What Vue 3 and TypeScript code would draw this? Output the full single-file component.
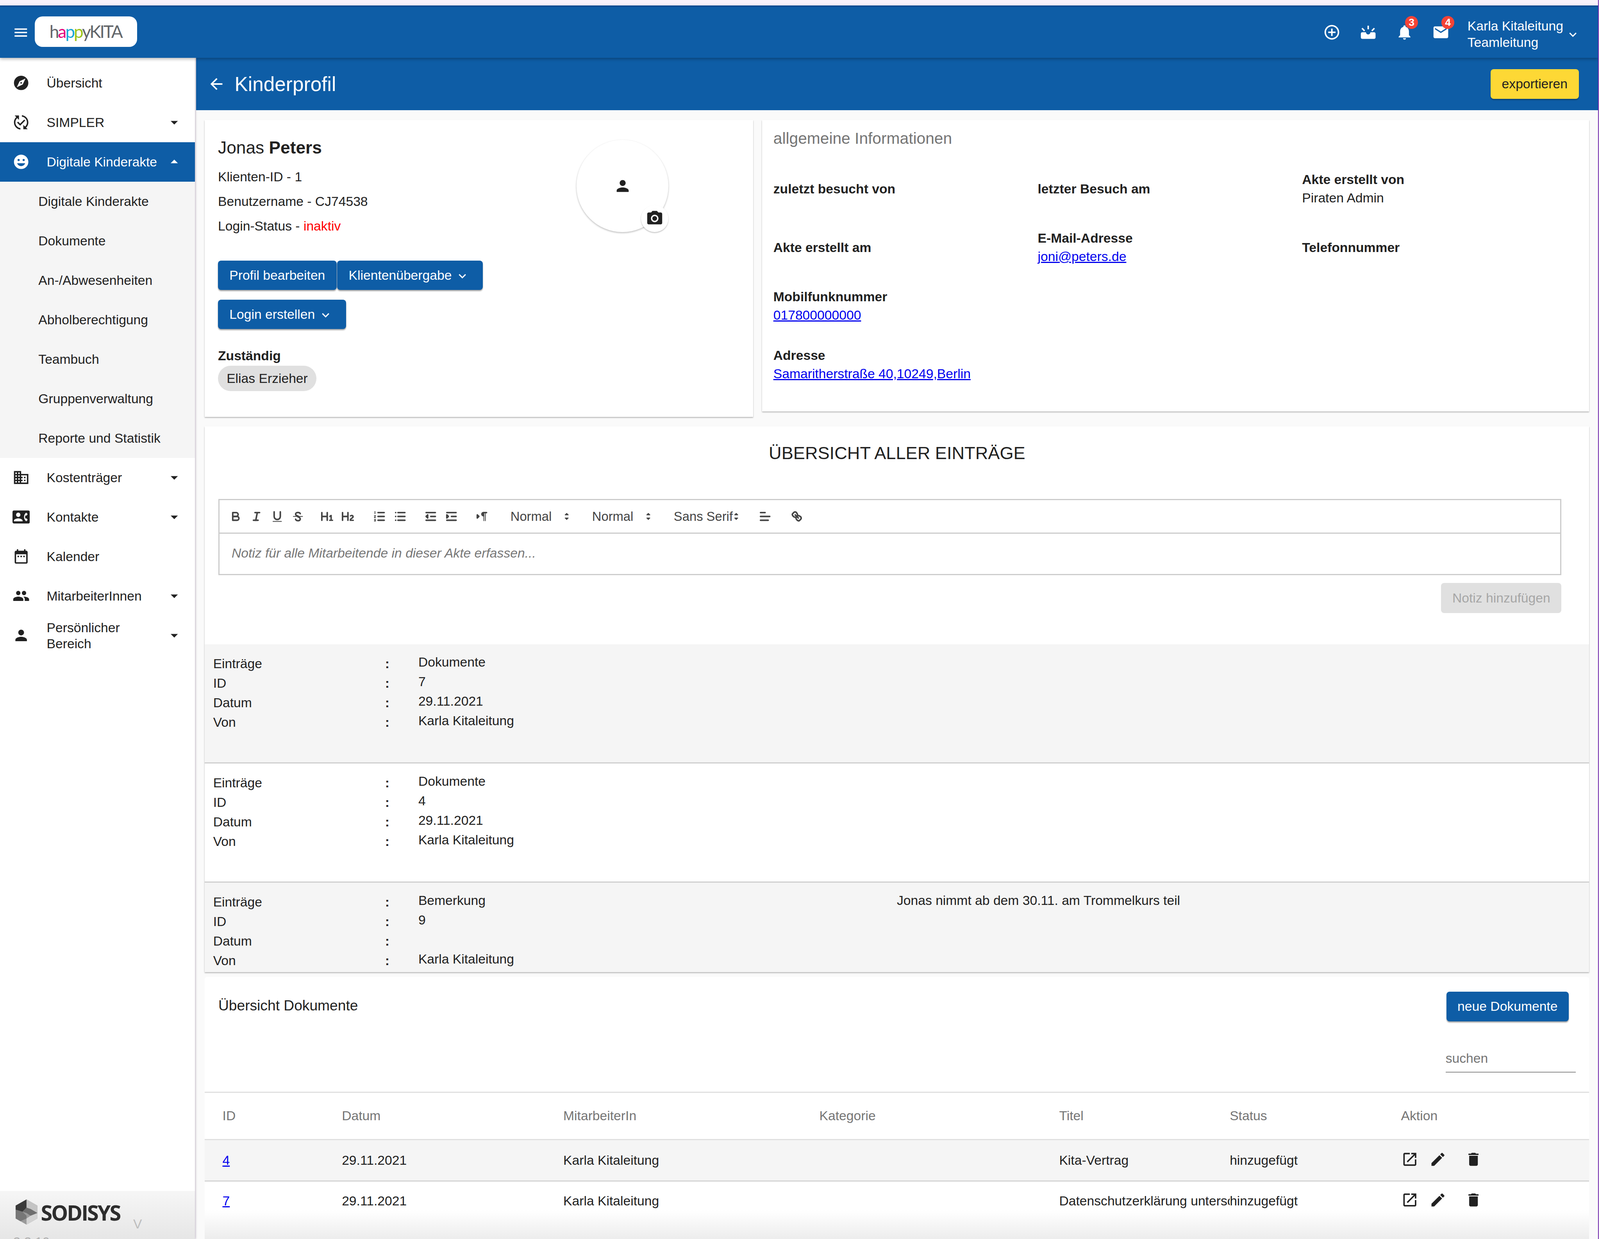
<script setup lang="ts">
interface NavItem {
  label: string;
  icon?: string;
  arrow?: "down" | "up";
  active?: boolean;
  sub?: boolean;
}

const ICONS: Record<string, string> = {
  menu: "M3 18h18v-2H3v2zm0-5h18v-2H3v2zm0-7v2h18V6H3z",
  explore:
    "M12 10.9c-.61 0-1.1.49-1.1 1.1s.49 1.1 1.1 1.1c.61 0 1.1-.49 1.1-1.1s-.49-1.1-1.1-1.1zM12 2C6.48 2 2 6.48 2 12s4.48 10 10 10 10-4.48 10-10S17.52 2 12 2zm2.19 12.19L6 18l3.81-8.19L18 6l-3.81 8.19z",
  changes:
    "M17.66,9.53l-7.07,7.07l-4.24-4.24l1.41-1.41l2.83,2.83l5.66-5.66L17.66,9.53z M4,12c0-2.33,1.02-4.42,2.62-5.88L9,8.5v-6H3 l2.2,2.2C3.24,6.52,2,9.11,2,12c0,5.19,3.95,9.45,9,9.95v-2.02C7.06,19.44,4,16.07,4,12z M22,12c0-5.19-3.95-9.45-9-9.95v2.02 c3.94,0.49,7,3.86,7,7.93c0,2.33-1.02,4.42-2.62,5.88L15,15.5v6h6l-2.2-2.2C20.76,17.48,22,14.89,22,12z",
  face: "M12 2C6.48 2 2 6.48 2 12s4.48 10 10 10 10-4.48 10-10S17.52 2 12 2zM8.5 8a1.5 1.5 0 1 1 0 3 1.5 1.5 0 0 1 0-3zm7 0a1.5 1.5 0 1 1 0 3 1.5 1.5 0 0 1 0-3zM12 18c-2.6 0-4.8-1.7-5.6-4h11.2c-.8 2.3-3 4-5.6 4z",
  business:
    "M12 7V3H2v18h20V7H12zM6 19H4v-2h2v2zm0-4H4v-2h2v2zm0-4H4V9h2v2zm0-4H4V5h2v2zm4 12H8v-2h2v2zm0-4H8v-2h2v2zm0-4H8V9h2v2zm0-4H8V5h2v2zm10 12h-8v-2h2v-2h-2v-2h2v-2h-2V9h8v10zm-2-8h-2v2h2v-2zm0 4h-2v2h2v-2z",
  contact:
    "M22 3H2C.9 3 0 3.9 0 5v14c0 1.1.9 2 2 2h20c1.1 0 1.99-.9 1.99-2L24 5c0-1.1-.9-2-2-2zM8 6c1.66 0 3 1.34 3 3s-1.34 3-3 3-3-1.34-3-3 1.34-3 3-3zm6 12H2v-1c0-2 4-3.1 6-3.1s6 1.1 6 3.1v1zm3.85-4h1.64L21 16l-1.99 1.99c-1.31-.98-2.28-2.38-2.73-3.99-.18-.64-.28-1.31-.28-2s.1-1.36.28-2c.45-1.62 1.42-3.01 2.73-3.99L21 8l-1.51 2h-1.64c-.22.63-.35 1.3-.35 2s.13 1.37.35 2z",
  calendar:
    "M9 11H7v2h2v-2zm4 0h-2v2h2v-2zm4 0h-2v2h2v-2zm2-7h-1V2h-2v2H8V2H6v2H5c-1.11 0-1.99.9-1.99 2L3 20c0 1.1.89 2 2 2h14c1.1 0 2-.9 2-2V6c0-1.1-.9-2-2-2zm0 16H5V9h14v11z",
  people:
    "M16 11c1.66 0 2.99-1.34 2.99-3S17.66 5 16 5c-1.66 0-3 1.34-3 3s1.34 3 3 3zm-8 0c1.66 0 2.99-1.34 2.99-3S9.66 5 8 5C6.34 5 5 6.34 5 8s1.34 3 3 3zm0 2c-2.33 0-7 1.17-7 3.5V19h14v-2.5c0-2.33-4.67-3.5-7-3.5zm8 0c-.29 0-.62.02-.97.05 1.16.84 1.97 1.97 1.97 3.45V19h6v-2.5c0-2.33-4.67-3.5-7-3.5z",
  person:
    "M12 12c2.21 0 4-1.79 4-4s-1.79-4-4-4-4 1.79-4 4 1.79 4 4 4zm0 2c-2.67 0-8 1.34-8 4v2h16v-2c0-2.66-5.33-4-8-4z",
  down: "M7 10l5 5 5-5z",
  up: "M7 14l5-5 5 5z",
  back: "M20 11H7.83l5.59-5.59L12 4l-8 8 8 8 1.41-1.41L7.83 13H20v-2z",
  plus: "M13 7h-2v4H7v2h4v4h2v-4h4v-2h-4V7zm-1-5C6.49 2 2 6.49 2 12s4.49 10 10 10 10-4.49 10-10S17.51 2 12 2zm0 18c-4.41 0-8-3.59-8-8s3.59-8 8-8 8 3.59 8 8-3.59 8-8 8z",
  upcoming:
    "M21.16 7.26l-1.41-1.41L16.19 9.4l1.41 1.41s3.45-3.56 3.56-3.55zM13 3h-2v5h2V3zM6.4 10.81L7.81 9.4 4.26 5.84 2.84 7.26c.11-.01 3.56 3.55 3.56 3.55zM20 12h-5c0 1.66-1.34 3-3 3s-3-1.34-3-3H4c-1.1 0-2 .9-2 2v5c0 1.1.9 2 2 2h16c1.1 0 2-.9 2-2v-5c0-1.1-.9-2-2-2z",
  bell: "M12 22c1.1 0 2-.9 2-2h-4c0 1.1.89 2 2 2zm6-6v-5c0-3.07-1.64-5.64-4.5-6.32V4c0-.83-.67-1.5-1.5-1.5s-1.5.67-1.5 1.5v.68C7.63 5.36 6 7.92 6 11v5l-2 2v1h16v-1l-2-2z",
  mail: "M20 4H4c-1.1 0-1.99.9-1.99 2L2 18c0 1.1.9 2 2 2h16c1.1 0 2-.9 2-2V6c0-1.1-.9-2-2-2zm0 4l-8 5-8-5V6l8 5 8-5v2z",
  chevron: "M16.59 8.59L12 13.17 7.41 8.59 6 10l6 6 6-6z",
  camera:
    "M12 8.8a3.2 3.2 0 1 0 0 6.4 3.2 3.2 0 0 0 0-6.4zM9 2L7.17 4H4c-1.1 0-2 .9-2 2v12c0 1.1.9 2 2 2h16c1.1 0 2-.9 2-2V6c0-1.1-.9-2-2-2h-3.17L15 2H9zm3 15c-2.76 0-5-2.24-5-5s2.24-5 5-5 5 2.24 5 5-2.24 5-5 5z",
  open: "M19 19H5V5h7V3H5c-1.11 0-2 .9-2 2v14c0 1.1.89 2 2 2h14c1.1 0 2-.9 2-2v-7h-2v7zM14 3v2h3.59l-9.83 9.83 1.41 1.41L19 6.41V10h2V3h-7z",
  edit: "M3 17.25V21h3.75L17.81 9.94l-3.75-3.75L3 17.25zM20.71 7.04c.39-.39.39-1.02 0-1.41l-2.34-2.34c-.39-.39-1.02-.39-1.41 0l-1.83 1.83 3.75 3.75 1.83-1.83z",
  trash: "M6 19c0 1.1.9 2 2 2h8c1.1 0 2-.9 2-2V7H6v12zM19 4h-3.5l-1-1h-5l-1 1H5v2h14V4z",
};

const navItems: NavItem[] = [
  { label: "Übersicht", icon: "explore" },
  { label: "SIMPLER", icon: "changes", arrow: "down" },
  { label: "Digitale Kinderakte", icon: "face", arrow: "up", active: true },
  { label: "Digitale Kinderakte", sub: true },
  { label: "Dokumente", sub: true },
  { label: "An-/Abwesenheiten", sub: true },
  { label: "Abholberechtigung", sub: true },
  { label: "Teambuch", sub: true },
  { label: "Gruppenverwaltung", sub: true },
  { label: "Reporte und Statistik", sub: true },
  { label: "Kostenträger", icon: "business", arrow: "down" },
  { label: "Kontakte", icon: "contact", arrow: "down" },
  { label: "Kalender", icon: "calendar" },
  { label: "MitarbeiterInnen", icon: "people", arrow: "down" },
  { label: "Persönlicher Bereich", icon: "person", arrow: "down" },
];

const infoCells = [
  { label: "zuletzt besucht von" },
  { label: "letzter Besuch am" },
  { label: "Akte erstellt von", value: "Piraten Admin" },
  { label: "Akte erstellt am" },
  { label: "E-Mail-Adresse", link: "joni@peters.de" },
  { label: "Telefonnummer" },
  { label: "Mobilfunknummer", link: "017800000000" },
];

const entries = [
  { type: "Dokumente", id: "7", date: "29.11.2021", by: "Karla Kitaleitung", note: "" },
  { type: "Dokumente", id: "4", date: "29.11.2021", by: "Karla Kitaleitung", note: "" },
  {
    type: "Bemerkung",
    id: "9",
    date: "",
    by: "Karla Kitaleitung",
    note: "Jonas nimmt ab dem 30.11. am Trommelkurs teil",
  },
];

const documents = [
  { id: "4", date: "29.11.2021", by: "Karla Kitaleitung", title: "Kita-Vertrag", status: "hinzugefügt" },
  { id: "7", date: "29.11.2021", by: "Karla Kitaleitung", title: "Datenschutzerklärung unterschrieben", status: "hinzugefügt" },
];

const columns = ["ID", "Datum", "MitarbeiterIn", "Kategorie", "Titel", "Status", "Aktion"];
</script>

<template>
  <div class="page">
    <header class="topbar">
      <svg class="menu-icon" viewBox="0 0 24 24"><path :d="ICONS.menu" /></svg>
      <div class="logo">
        <span class="logo-grey">h</span><span class="logo-pink">a</span><span class="logo-blue">p</span><span class="logo-green">p</span><span class="logo-grey">yKITA</span>
      </div>
      <div class="top-actions">
        <svg class="top-icon" viewBox="0 0 24 24"><path :d="ICONS.plus" /></svg>
        <svg class="top-icon" viewBox="0 0 24 24"><path :d="ICONS.upcoming" /></svg>
        <span class="top-badged">
          <svg class="top-icon" viewBox="0 0 24 24"><path :d="ICONS.bell" /></svg>
          <span class="badge">3</span>
        </span>
        <span class="top-badged">
          <svg class="top-icon" viewBox="0 0 24 24"><path :d="ICONS.mail" /></svg>
          <span class="badge">4</span>
        </span>
        <div class="user">Karla Kitaleitung<br />Teamleitung</div>
        <svg class="user-chevron" viewBox="0 0 24 24"><path :d="ICONS.chevron" /></svg>
      </div>
    </header>

    <div class="body-row">
      <aside class="sidebar">
        <nav class="nav">
          <div
            v-for="item in navItems"
            :key="item.label + item.sub"
            class="nav-item"
            :class="{ active: item.active, sub: item.sub }"
          >
            <svg v-if="item.icon" class="nav-icon" viewBox="0 0 24 24"><path :d="ICONS[item.icon]" /></svg>
            <span class="nav-label">{{ item.label }}</span>
            <svg v-if="item.arrow" class="nav-arrow" viewBox="0 0 24 24"><path :d="ICONS[item.arrow]" /></svg>
          </div>
        </nav>
        <div class="side-foot">
          <div class="foot-row">
            <svg class="hex" viewBox="0 0 64 74">
              <polygon points="32,0 64,18 64,56 32,74 0,56 0,18" fill="#9a9a9a" />
              <polygon points="32,0 0,18 0,30 20,36 32,24" fill="#3a3a3a" />
              <polygon points="32,0 64,18 64,40 44,28 32,24" fill="#c4c4c4" />
              <polygon points="32,24 44,28 64,40 44,48 32,40 20,36" fill="#6e6e6e" />
              <polygon points="0,30 20,36 32,48 32,56 14,64 0,56" fill="#777" />
              <polygon points="32,56 44,48 64,40 64,56 32,74" fill="#d2d2d2" />
            </svg>
            <span class="sodisys">SODISYS</span>
            <span class="version-v">V</span>
          </div>
          <div class="version">3.3.10</div>
        </div>
      </aside>

      <main class="main">
        <div class="title-bar">
          <svg class="back-icon" viewBox="0 0 24 24"><path :d="ICONS.back" /></svg>
          <span class="title">Kinderprofil</span>
          <button class="btn-export">exportieren</button>
        </div>

        <div class="content">
          <div class="top-cards">
            <section class="card card-profile">
              <div class="profile-left">
                <div class="name">Jonas <b>Peters</b></div>
                <div class="meta">Klienten-ID - 1</div>
                <div class="meta">Benutzername - CJ74538</div>
                <div class="meta">Login-Status - <span class="inactive">inaktiv</span></div>
                <div class="btn-row first">
                  <button class="btn">Profil bearbeiten</button>
                  <button class="btn with-icon">
                    Klientenübergabe
                    <svg viewBox="0 0 24 24"><path :d="ICONS.chevron" /></svg>
                  </button>
                </div>
                <div class="btn-row">
                  <button class="btn with-icon">
                    Login erstellen
                    <svg viewBox="0 0 24 24"><path :d="ICONS.chevron" /></svg>
                  </button>
                </div>
                <div class="resp-label">Zuständig</div>
                <span class="chip">Elias Erzieher</span>
              </div>
              <div class="avatar-slot">
                <div class="avatar">
                  <svg class="avatar-person" viewBox="0 0 24 24"><path :d="ICONS.person" /></svg>
                  <span class="avatar-cam">
                    <svg viewBox="0 0 24 24"><path :d="ICONS.camera" /></svg>
                  </span>
                </div>
              </div>
            </section>

            <section class="card card-info">
              <h2 class="info-title">allgemeine Informationen</h2>
              <div class="info-grid">
                <div v-for="cell in infoCells" :key="cell.label" class="info-cell">
                  <b>{{ cell.label }}</b>
                  <span v-if="cell.value">{{ cell.value }}</span>
                  <a v-if="cell.link" href="#">{{ cell.link }}</a>
                </div>
                <div class="info-cell wide">
                  <b>Adresse</b>
                  <a href="#">Samaritherstraße 40,10249,Berlin</a>
                </div>
              </div>
            </section>
          </div>

          <section class="card card-main">
            <h1 class="overview-title">ÜBERSICHT ALLER EINTRÄGE</h1>

            <div class="editor">
              <div class="toolbar">
                <span class="tb"><svg viewBox="0 0 18 18"><path class="st" d="M5,4H9.5A2.5,2.5,0,0,1,12,6.5v0A2.5,2.5,0,0,1,9.5,9H5V4Z" /><path class="st" d="M5,9h5.5A2.5,2.5,0,0,1,13,11.5v0A2.5,2.5,0,0,1,10.5,14H5V9Z" /></svg></span>
                <span class="tb"><svg viewBox="0 0 18 18"><line class="st" x1="7" x2="13" y1="4" y2="4" /><line class="st" x1="5" x2="11" y1="14" y2="14" /><line class="st" x1="8" x2="10" y1="14" y2="4" /></svg></span>
                <span class="tb"><svg viewBox="0 0 18 18"><path class="st" d="M5,3V9a4,4,0,0,0,4,4H9a4,4,0,0,0,4-4V3" /><rect class="fl" x="3" y="15" width="12" height="1" rx=".5" /></svg></span>
                <span class="tb"><svg viewBox="0 0 18 18"><line class="st thin" x1="15" x2="3" y1="9" y2="9" /><path class="st" d="M12 5.5C12 3.5 6 3 6 6c0 1.6 1.5 2.2 3 2.5M6 12.5c0 2.5 6 3 6 0 0-1.5-1.5-2.5-3-3" /></svg></span>
                <span class="tb gap-24"><svg viewBox="0 0 18 18"><path class="fl" d="M10,4V14a1,1,0,0,1-2,0V10H3v4a1,1,0,0,1-2,0V4A1,1,0,0,1,3,4V8H8V4a1,1,0,0,1,2,0Zm6.06787,9.209H14.98975V7.59863a.54085.54085,0,0,0-.605-.60547h-.62744a1.01119,1.01119,0,0,0-.748.29688L11.645,8.56641a.5435.5435,0,0,0-.022.8584l.28613.30762a.53861.53861,0,0,0,.84717.0332l.09912-.08789a1.2137,1.2137,0,0,0,.2417-.35254h.02246s-.01123.30859-.01123.60547V13.209H12.041a.54085.54085,0,0,0-.605.60547v.43945a.54085.54085,0,0,0,.605.60547h4.02686a.54085.54085,0,0,0,.605-.60547v-.43945A.54085.54085,0,0,0,16.06787,13.209Z" /></svg></span>
                <span class="tb"><svg viewBox="0 0 18 18"><path class="fl" d="M16.73975,13.81445v.43945a.54085.54085,0,0,1-.605.60547H11.855a.58392.58392,0,0,1-.64893-.60547V14.0127c0-2.90527,3.39941-3.42187,3.39941-4.55469a.77675.77675,0,0,0-.84717-.78125,1.17684,1.17684,0,0,0-.83594.38477c-.2749.26367-.561.374-.85791.13184l-.4292-.34082c-.30811-.24219-.38525-.51758-.1543-.81445a2.97155,2.97155,0,0,1,2.45361-1.17676,2.45393,2.45393,0,0,1,2.68408,2.40918c0,2.45312-3.1792,2.92676-3.27832,3.93848h2.79443A.54085.54085,0,0,1,16.73975,13.81445ZM9,3A.99974.99974,0,0,0,8,4V8H3V4A1,1,0,0,0,1,4V14a1,1,0,0,0,2,0V10H8v4a1,1,0,0,0,2,0V4A.99974.99974,0,0,0,9,3Z" /></svg></span>
                <span class="tb gap-32"><svg viewBox="0 0 18 18"><line class="st" x1="7" x2="15" y1="4" y2="4" /><line class="st" x1="7" x2="15" y1="9" y2="9" /><line class="st" x1="7" x2="15" y1="14" y2="14" /><line class="st thin" x1="3" x2="3" y1="2.5" y2="5.5" /><path class="st thin" d="M2.2 8h1.6L2.2 10.5h1.6" /><path class="st thin" d="M2.2 13h1.6l-.8 1 .8 1H2.2" /></svg></span>
                <span class="tb"><svg viewBox="0 0 18 18"><line class="st" x1="6" x2="15" y1="4" y2="4" /><line class="st" x1="6" x2="15" y1="9" y2="9" /><line class="st" x1="6" x2="15" y1="14" y2="14" /><line class="st" x1="3" x2="3" y1="4" y2="4" /><line class="st" x1="3" x2="3" y1="9" y2="9" /><line class="st" x1="3" x2="3" y1="14" y2="14" /></svg></span>
                <span class="tb gap-28"><svg viewBox="0 0 18 18"><line class="st" x1="3" x2="15" y1="14" y2="14" /><line class="st" x1="3" x2="15" y1="4" y2="4" /><line class="st" x1="9" x2="15" y1="9" y2="9" /><polygon class="fl st" points="5 7 5 11 3 9 5 7" /></svg></span>
                <span class="tb"><svg viewBox="0 0 18 18"><line class="st" x1="3" x2="15" y1="14" y2="14" /><line class="st" x1="3" x2="15" y1="4" y2="4" /><line class="st" x1="9" x2="15" y1="9" y2="9" /><polygon class="fl st" points="3 7 3 11 5 9 3 7" /></svg></span>
                <span class="tb gap-28"><svg viewBox="0 0 18 18"><polygon class="fl st" points="3 11 5 9 3 7 3 11" /><line class="st" x1="15" x2="11" y1="4" y2="4" /><path class="fl" d="M11,3a3,3,0,0,0,0,6h1V3H11Z" /><rect class="fl" height="11" width="1" x="11" y="4" /><rect class="fl" height="11" width="1" x="13" y="4" /></svg></span>
                <span class="pick first-pick"><span class="pick-label">Normal</span><svg viewBox="0 0 18 18"><polygon class="arrow" points="7 11 9 13 11 11 7 11" /><polygon class="arrow" points="7 7 9 5 11 7 7 7" /></svg></span>
                <span class="pick"><span class="pick-label">Normal</span><svg viewBox="0 0 18 18"><polygon class="arrow" points="7 11 9 13 11 11 7 11" /><polygon class="arrow" points="7 7 9 5 11 7 7 7" /></svg></span>
                <span class="pick serif"><span class="pick-label">Sans Serif</span><svg viewBox="0 0 18 18"><polygon class="arrow" points="7 11 9 13 11 11 7 11" /><polygon class="arrow" points="7 7 9 5 11 7 7 7" /></svg></span>
                <span class="tb"><svg viewBox="0 0 18 18"><line class="st" x1="3" x2="15" y1="9" y2="9" /><line class="st" x1="3" x2="13" y1="14" y2="14" /><line class="st" x1="3" x2="9" y1="4" y2="4" /></svg></span>
                <span class="tb gap-32"><svg viewBox="0 0 18 18"><line class="st" x1="7" x2="11" y1="7" y2="11" /><path class="st" d="M8.9,4.577a3.476,3.476,0,0,1,.36,4.679A3.476,3.476,0,0,1,4.577,8.9C3.185,7.5,2.776,6.347,3.7,5.423l1.88-1.88A2.25,2.25,0,0,1,8.9,4.577Z" /><path class="st" d="M13.423,9.1a3.476,3.476,0,0,0-4.679-.36,3.476,3.476,0,0,0,.36,4.679c1.392,1.392,2.5,1.76,3.42.84l1.88-1.88a2.25,2.25,0,0,0-.98-3.28Z" /></svg></span>
              </div>
              <div class="editor-text">Notiz für alle Mitarbeitende in dieser Akte erfassen...</div>
            </div>
            <div class="note-actions"><button class="btn-disabled">Notiz hinzufügen</button></div>

            <div class="entries">
              <div v-for="entry in entries" :key="entry.id" class="entry">
                <div class="entry-labels">
                  <span>Einträge</span><span>ID</span><span>Datum</span><span>Von</span>
                </div>
                <div class="entry-colons">
                  <span>:</span><span>:</span><span>:</span><span>:</span>
                </div>
                <div class="entry-values">
                  <span>{{ entry.type }}</span><span>{{ entry.id }}</span><span>{{ entry.date }}</span><span>{{ entry.by }}</span>
                </div>
                <div class="entry-note">{{ entry.note }}</div>
              </div>
            </div>
          </section>

          <section class="card card-docs">
            <div class="docs-head">
              <div class="docs-title">Übersicht Dokumente</div>
              <button class="btn docs-btn">neue Dokumente</button>
            </div>
            <div class="docs-search"><span class="search-box">suchen</span></div>

            <table class="doc-table">
              <colgroup>
                <col v-for="col in columns" :key="col" />
              </colgroup>
              <thead>
                <tr>
                  <th v-for="col in columns" :key="col">{{ col }}</th>
                </tr>
              </thead>
              <tbody>
                <tr v-for="doc in documents" :key="doc.id">
                  <td><a href="#">{{ doc.id }}</a></td>
                  <td>{{ doc.date }}</td>
                  <td>{{ doc.by }}</td>
                  <td></td>
                  <td class="clip"><div>{{ doc.title }}</div></td>
                  <td>{{ doc.status }}</td>
                  <td class="actions">
                    <svg viewBox="0 0 24 24"><path :d="ICONS.open" /></svg>
                    <svg viewBox="0 0 24 24"><path :d="ICONS.edit" /></svg>
                    <svg viewBox="0 0 24 24"><path :d="ICONS.trash" /></svg>
                  </td>
                </tr>
              </tbody>
            </table>
          </section>
        </div>
      </main>
    </div>
  </div>
</template>

<style>
html,
body {
  margin: 0;
  background: #fff;
  overflow: hidden;
}
</style>

<style scoped>
/* --u is one pixel of the 4624 wide design, horizontal sizes follow the window */
.page {
  --u: calc(100vw / 4624);
  box-sizing: border-box;
  width: calc(4621 * var(--u));
  height: 3171px;
  padding-top: 14px;
  background: #f8f2fb;
  border-right: calc(3 * var(--u)) solid #6a1ea8;
  display: flex;
  flex-direction: column;
  overflow: hidden;
  font-family: "Liberation Sans", Arial, sans-serif;
  font-size: calc(38 * var(--u));
  color: #212121;
}
button {
  font-family: inherit;
  border: 0;
}
a {
  color: #0000ee;
}

/* top bar */
.topbar {
  flex: none;
  height: 134px;
  box-sizing: border-box;
  background: #0e5da6;
  border-top: 4px solid #0a4c93;
  display: flex;
  align-items: center;
  padding-left: calc(36 * var(--u));
  position: relative;
  z-index: 3;
  box-shadow: 0 3px 8px rgba(0, 0, 0, 0.3);
}
.menu-icon {
  width: calc(48 * var(--u));
  height: calc(48 * var(--u));
  fill: #fff;
}
.logo {
  margin: -4px 0 0 calc(16 * var(--u));
  width: calc(296 * var(--u));
  height: 78px;
  box-sizing: border-box;
  padding-left: calc(43 * var(--u));
  background: #fff;
  border-radius: 20px;
  font-family: Lato, sans-serif;
  font-size: calc(50 * var(--u));
  line-height: 76px;
  letter-spacing: calc(-3.5 * var(--u));
  white-space: nowrap;
}
.logo-pink {
  color: #e5007e;
}
.logo-blue {
  color: #1aa7d8;
}
.logo-green {
  color: #9dc41a;
}
.logo-grey {
  color: #62666a;
}
.top-actions {
  margin-left: auto;
  display: flex;
  align-items: center;
  color: #fff;
  padding-right: calc(52 * var(--u));
}
.top-icon {
  width: calc(51 * var(--u));
  height: calc(51 * var(--u));
  fill: #fff;
  display: block;
}
.top-actions > .top-icon,
.top-badged {
  margin-right: calc(54 * var(--u));
}
.top-badged {
  position: relative;
}
.badge {
  position: absolute;
  top: -19px;
  left: calc(27 * var(--u));
  width: calc(37 * var(--u));
  height: calc(37 * var(--u));
  border-radius: 50%;
  background: #f44336;
  color: #fff;
  font-size: calc(30 * var(--u));
  font-weight: 700;
  line-height: calc(37 * var(--u));
  text-align: center;
}
.user {
  margin: 10px 0 0 calc(-3 * var(--u));
  line-height: 42px;
  white-space: nowrap;
}
.user-chevron {
  width: calc(42 * var(--u));
  height: calc(42 * var(--u));
  fill: #fff;
  margin-left: calc(7 * var(--u));
  margin-top: 12px;
}

/* sidebar */
.body-row {
  flex: 1;
  min-height: 0;
  display: flex;
}
.sidebar {
  flex: none;
  width: calc(563 * var(--u));
  background: #fff;
  margin-right: calc(4 * var(--u));
  display: flex;
  flex-direction: column;
  box-shadow: 2px 0 5px rgba(0, 0, 0, 0.2);
  position: relative;
  z-index: 2;
}
.nav {
  padding-top: 14px;
}
.nav-item {
  height: 101px;
  display: flex;
  align-items: center;
  padding-left: calc(36 * var(--u));
  line-height: 41px;
}
.nav-item.active {
  background: #0e5da6;
  color: #fff;
}
.nav-item.sub {
  background: #f5f5f5;
  padding-left: calc(111 * var(--u));
}
.nav-icon {
  flex: none;
  width: calc(50 * var(--u));
  height: calc(50 * var(--u));
  fill: #212121;
  margin-right: calc(49 * var(--u));
}
.active .nav-icon,
.active .nav-arrow {
  fill: #fff;
}
.nav-label {
  width: calc(330 * var(--u));
}
.sub .nav-label {
  width: auto;
  white-space: nowrap;
}
.nav-arrow {
  flex: none;
  width: calc(50 * var(--u));
  height: calc(50 * var(--u));
  fill: #212121;
  margin-left: calc(14 * var(--u));
}
.side-foot {
  margin-top: auto;
  height: 123px;
  box-sizing: border-box;
  padding: 18px 0 0 calc(45 * var(--u));
  background: linear-gradient(#f6f6f6, #e6e6e6);
  position: relative;
  overflow: hidden;
}
.foot-row {
  display: flex;
  align-items: flex-start;
}
.hex {
  width: calc(63 * var(--u));
  height: 72px;
  flex: none;
}
.sodisys {
  margin-left: calc(10 * var(--u));
  margin-top: 2px;
  font-family: "Open Sans", sans-serif;
  font-weight: 700;
  font-size: calc(61 * var(--u));
  line-height: 70px;
  letter-spacing: calc(-3.4 * var(--u));
  color: #2d2d2d;
}
.version-v {
  margin: 48px 0 0 calc(38 * var(--u));
  color: #bdbdbd;
  line-height: 38px;
}
.version {
  position: absolute;
  left: calc(38 * var(--u));
  top: 112px;
  color: #b0b0b0;
  line-height: 38px;
}

/* main */
.main {
  flex: 1;
  min-width: 0;
  display: flex;
  flex-direction: column;
  background: #fafafa;
}
.title-bar {
  flex: none;
  height: 134px;
  background: #0e5da6;
  color: #fff;
  display: flex;
  align-items: center;
  padding: 0 calc(56 * var(--u)) 0 calc(33 * var(--u));
}
.back-icon {
  width: calc(52 * var(--u));
  height: calc(52 * var(--u));
  fill: #fff;
}
.title {
  margin-left: calc(26 * var(--u));
  font-size: calc(58 * var(--u));
}
.btn-export {
  margin-left: auto;
  width: calc(255 * var(--u));
  height: 76px;
  border-radius: 8px;
  background: #fdd835;
  color: #212121;
  font-size: calc(38 * var(--u));
  box-shadow: 0 3px 3px rgba(0, 0, 0, 0.3);
}
.content {
  flex: 1;
  min-height: 0;
  padding: 25px calc(26 * var(--u)) 0 calc(25 * var(--u));
}
.top-cards {
  display: flex;
  align-items: flex-start;
  gap: calc(27 * var(--u));
}
.card {
  background: #fff;
  box-shadow: 0 2px 3px rgba(0, 0, 0, 0.3);
  box-sizing: border-box;
}
.card-profile {
  flex: none;
  width: calc(1584 * var(--u));
  height: 760px;
  padding: 41px calc(244 * var(--u)) 0 calc(38 * var(--u));
  display: flex;
  justify-content: space-between;
  align-items: flex-start;
}
.name {
  font-size: calc(50 * var(--u));
  line-height: 60px;
  margin-bottom: 13px;
}
.meta {
  line-height: 63px;
}
.inactive {
  color: #f00;
}
.btn-row {
  display: flex;
  gap: calc(2 * var(--u));
  margin-bottom: 25px;
}
.btn-row.first {
  margin-top: 57px;
}
.btn {
  height: 75px;
  padding: 0 calc(33 * var(--u));
  background: #0e5da6;
  color: #fff;
  font-size: calc(38 * var(--u));
  border-radius: 8px;
  box-shadow: 0 3px 3px rgba(0, 0, 0, 0.35);
  display: inline-flex;
  align-items: center;
}
.btn.with-icon {
  padding-right: calc(38 * var(--u));
}
.btn svg {
  width: calc(42 * var(--u));
  height: calc(42 * var(--u));
  fill: #fff;
  margin-left: calc(10 * var(--u));
  margin-top: 4px;
}
.resp-label {
  font-weight: 700;
  line-height: 47px;
  margin-top: 45px;
}
.chip {
  display: inline-flex;
  align-items: center;
  margin-top: 2px;
  height: 65px;
  padding: 0 calc(25 * var(--u));
  border-radius: 33px;
  background: #e0e0e0;
}
.avatar-slot {
  flex: none;
  height: 266px;
  margin-top: -5px;
  display: flex;
  align-items: center;
}
.avatar {
  position: relative;
  width: calc(266 * var(--u));
  height: calc(266 * var(--u));
  border-radius: 50%;
  background: #fff;
  box-shadow: 0 2px 4px rgba(0, 0, 0, 0.28);
  display: flex;
  align-items: center;
  justify-content: center;
}
.avatar-person {
  width: calc(52 * var(--u));
  height: calc(52 * var(--u));
  fill: #212121;
}
.avatar-cam {
  position: absolute;
  right: calc(1 * var(--u));
  bottom: 0;
  width: calc(78 * var(--u));
  height: calc(78 * var(--u));
  border-radius: 50%;
  background: #fff;
  box-shadow: 0 2px 3px rgba(0, 0, 0, 0.25);
  display: flex;
  align-items: center;
  justify-content: center;
}
.avatar-cam svg {
  width: calc(52 * var(--u));
  height: calc(52 * var(--u));
  fill: #212121;
}
.card-info {
  flex: 1;
  height: 746px;
  padding: 17px calc(32 * var(--u)) 0;
}
.info-title {
  margin: 0 0 52px;
  font-size: calc(46 * var(--u));
  font-weight: 400;
  line-height: 60px;
  color: #757575;
}
.info-grid {
  display: grid;
  grid-template-columns: calc(764 * var(--u)) calc(764 * var(--u)) 1fr;
  grid-auto-rows: 94px;
  row-gap: 56px;
}
.info-cell {
  display: flex;
  flex-direction: column;
  justify-content: center;
  align-items: flex-start;
  line-height: 47px;
}
.info-cell.wide {
  grid-column: 1 / 3;
}
.card-main {
  margin-top: 24px;
}
.overview-title {
  margin: 0;
  padding-top: 34px;
  text-align: center;
  font-size: calc(51 * var(--u));
  font-weight: 400;
  line-height: 70px;
}
.editor {
  margin: 82px calc(80 * var(--u)) 0 calc(39 * var(--u));
  border: 3px solid #ccc;
}
.toolbar {
  height: 86px;
  box-sizing: border-box;
  border-bottom: 3px solid #ccc;
  padding-left: calc(17 * var(--u));
  display: flex;
  align-items: center;
  color: #444;
}
.tb {
  flex: none;
  width: calc(60 * var(--u));
  display: flex;
  justify-content: center;
}
.tb svg,
.pick svg {
  width: calc(40 * var(--u));
  height: calc(40 * var(--u));
  flex: none;
}
.st {
  fill: none;
  stroke: #444;
  stroke-width: 2;
  stroke-linecap: round;
  stroke-linejoin: round;
}
.st.thin {
  stroke-width: 1;
}
.fl,
.fl.st {
  fill: #444;
}
.arrow {
  fill: #444;
  stroke: #444;
  stroke-width: 1;
  stroke-linejoin: round;
}
.gap-24 {
  margin-left: calc(24 * var(--u));
}
.gap-28 {
  margin-left: calc(28 * var(--u));
}
.gap-32 {
  margin-left: calc(32 * var(--u));
}
.pick {
  flex: none;
  width: calc(236 * var(--u));
  display: flex;
  align-items: center;
  font-size: calc(37 * var(--u));
  white-space: nowrap;
}
.first-pick {
  margin-left: calc(52 * var(--u));
}
.pick-label {
  flex: none;
  width: calc(143 * var(--u));
}
.serif {
  width: calc(234 * var(--u));
}
.serif .pick-label {
  width: calc(161 * var(--u));
}
.editor-text {
  height: 103px;
  box-sizing: border-box;
  padding-left: calc(35 * var(--u));
  line-height: 100px;
  font-style: italic;
  color: #777;
}
.note-actions {
  margin: 20px calc(80 * var(--u)) 0 0;
  display: flex;
  justify-content: flex-end;
}
.btn-disabled {
  width: calc(348 * var(--u));
  height: 77px;
  border-radius: 8px;
  background: #e0e0e0;
  color: #a6a6a6;
  font-size: calc(38 * var(--u));
}
.entries {
  margin-top: 80px;
}
.entry {
  display: flex;
  padding: 25px 0 77px calc(24 * var(--u));
  background: #f5f5f5;
  border-bottom: 3px solid #cfcfcf;
  line-height: 50px;
}
.entry:nth-child(2) {
  background: #fff;
}
.entry:last-child {
  padding-bottom: 4px;
  border-bottom: 0;
}
.entry > div > span {
  display: block;
  height: 50px;
}
.entry-labels {
  width: calc(497 * var(--u));
}
.entry-colons {
  width: calc(96 * var(--u));
  font-weight: 700;
}
.entry-values {
  width: calc(1383 * var(--u));
  margin-top: -4px;
}
.entry-note {
  margin-top: -4px;
}
.card-docs {
  margin-top: 12px;
  height: 700px;
  padding-top: 38px;
  border-radius: 6px 6px 0 0;
  box-shadow: none;
}
.docs-head {
  display: flex;
  justify-content: space-between;
  align-items: center;
  height: 76px;
  padding: 0 calc(59 * var(--u)) 0 calc(39 * var(--u));
}
.docs-title {
  font-size: calc(42 * var(--u));
  margin-top: -6px;
}
.docs-btn {
  width: calc(354 * var(--u));
  justify-content: center;
  padding: 0;
  height: 76px;
}
.docs-search {
  display: flex;
  justify-content: flex-end;
  margin: 67px calc(39 * var(--u)) 0 0;
}
.search-box {
  width: calc(376 * var(--u));
  height: 62px;
  line-height: 56px;
  border-bottom: 2px solid #8a8a8a;
  color: #757575;
}
.doc-table {
  margin-top: 49px;
  width: 100%;
  table-layout: fixed;
  border-collapse: collapse;
  border-top: 3px solid #e0e0e0;
}
.doc-table col:nth-child(1) {
  width: calc(396 * var(--u));
}
.doc-table col:nth-child(2) {
  width: calc(640 * var(--u));
}
.doc-table col:nth-child(3) {
  width: calc(740 * var(--u));
}
.doc-table col:nth-child(4) {
  width: calc(693 * var(--u));
}
.doc-table col:nth-child(5) {
  width: calc(493 * var(--u));
}
.doc-table col:nth-child(6) {
  width: calc(495 * var(--u));
}
.doc-table th {
  height: 118px;
  padding: 0;
  text-align: left;
  font-weight: 400;
  color: #757575;
  border-bottom: 3px solid #e0e0e0;
}
.doc-table th:first-child,
.doc-table td:first-child {
  padding-left: calc(51 * var(--u));
}
.doc-table td {
  height: 103px;
  padding: 0;
  vertical-align: middle;
  border-bottom: 3px solid #d6d6d6;
  background: #f5f5f5;
}
.doc-table tr:nth-child(2) td {
  height: 99px;
  padding-bottom: 48px;
  border-bottom: 0;
  background: linear-gradient(#fff 50%, #ececec);
}
.clip div {
  width: calc(493 * var(--u));
  overflow: hidden;
  white-space: nowrap;
}
.actions svg {
  width: calc(50 * var(--u));
  height: calc(50 * var(--u));
  fill: #212121;
  margin-right: calc(32 * var(--u));
  vertical-align: middle;
  margin-top: -6px;
}
.actions svg:nth-child(2) {
  margin-right: calc(53 * var(--u));
}
</style>
